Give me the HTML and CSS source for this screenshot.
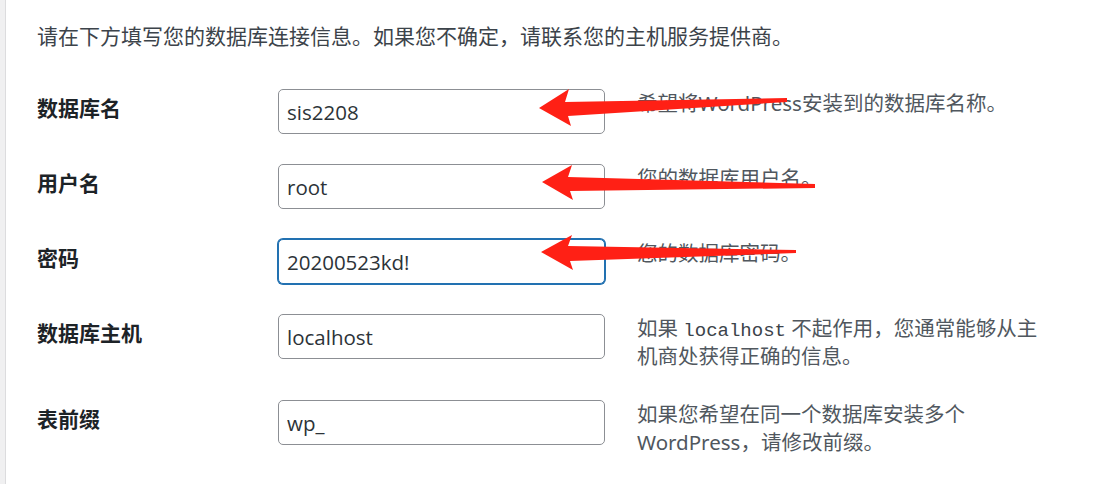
FILE: index.html
```html
<!DOCTYPE html>
<html lang="zh-CN">
<head>
    <meta charset="UTF-8">
    <title>WordPress › 安装配置文件</title>
    <link rel="stylesheet" href="styles.css">
</head>
<body>

    <!-- Левая полоса -->
    <div class="edge"></div>

    <div class="main">
        <p class="intro">请在下方填写您的数据库连接信息。如果您不确定，请联系您的主机服务提供商。</p>

        <div class="form-table">
            <div class="row">
                <label class="label" for="dbname">数据库名</label>
                <input class="field" id="dbname" type="text" value="sis2208">
                <div class="desc">希望将WordPress安装到的数据库名称。</div>
            </div>
            <div class="row">
                <label class="label" for="uname">用户名</label>
                <input class="field" id="uname" type="text" value="root">
                <div class="desc">您的数据库用户名。</div>
            </div>
            <div class="row">
                <label class="label" for="pwd">密码</label>
                <input class="field focus" id="pwd" type="text" value="20200523kd!">
                <div class="desc">您的数据库密码。</div>
            </div>
            <div class="row">
                <label class="label" for="dbhost">数据库主机</label>
                <input class="field" id="dbhost" type="text" value="localhost">
                <div class="desc">如果 <code>localhost</code> 不起作用，您通常能够从主机商处获得正确的信息。</div>
            </div>
            <div class="row">
                <label class="label" for="prefix">表前缀</label>
                <input class="field" id="prefix" type="text" value="wp_">
                <div class="desc">如果您希望在同一个数据库安装多个WordPress，请修改前缀。</div>
            </div>
        </div>
    </div>

    <!-- Стрелки поверх формы -->
    <svg class="arrows" width="1104" height="484" viewBox="0 0 1104 484">
        <polygon points="539,108 569,89 565,102 787,98 787,102 568,116 571,126"/>
        <polygon points="542,182 572,165 568,177 815,184 815,188 570,191 573,200"/>
        <polygon points="541,252 572,235 568,246 796,250 796,253 570,261 573,270"/>
    </svg>

</body>
</html>
```

FILE: styles.css
```css
* {
    box-sizing: border-box;
    margin: 0;
    padding: 0;
}

body {
    font-family: "Noto Sans", "Noto Sans CJK SC", sans-serif;
    font-size: 20.5px;
    line-height: 28px;
    color: #3c434a;
    background: #fff;
    display: flex;
    min-height: 100vh;
    overflow: hidden;
    position: relative;
}

.edge {
    width: 6px;
    background: #f0f0f1;
    border-right: 1px solid #dcdcde;
}

.main {
    padding: 22px 0 0 31px;
}

.intro {
    font-size: 21px;
    margin-bottom: 24px;
}

/* Таблица полей */
.row {
    display: grid;
    grid-template-columns: 241px 327px 447px;
    padding: 15px 0;
    align-items: start;
}

.label {
    font-family: "Noto Sans CJK SC", sans-serif;
    font-size: 21px;
    font-weight: 700;
    color: #1d2327;
    padding-top: 4px;
}

.field {
    height: 45px;
    border: 1px solid #8c8f94;
    border-radius: 5px;
    padding: 0 8px;
    font-family: "Open Sans", "Noto Sans", sans-serif;
    font-size: 20.5px;
    color: #2c3338;
    background: #fff;
    outline: none;
}

.field.focus {
    border-color: #2271b1;
    box-shadow: 0 0 0 1px #2271b1;
}

.desc {
    padding-left: 32px;
    color: #50575e;
}

.desc code {
    font-family: "Liberation Mono", monospace;
    font-size: 19px;
    line-height: 1;
    color: #3c434a;
}

.arrows {
    position: absolute;
    left: 0;
    top: 0;
    pointer-events: none;
}

.arrows polygon {
    fill: #ff2015;
}
```
